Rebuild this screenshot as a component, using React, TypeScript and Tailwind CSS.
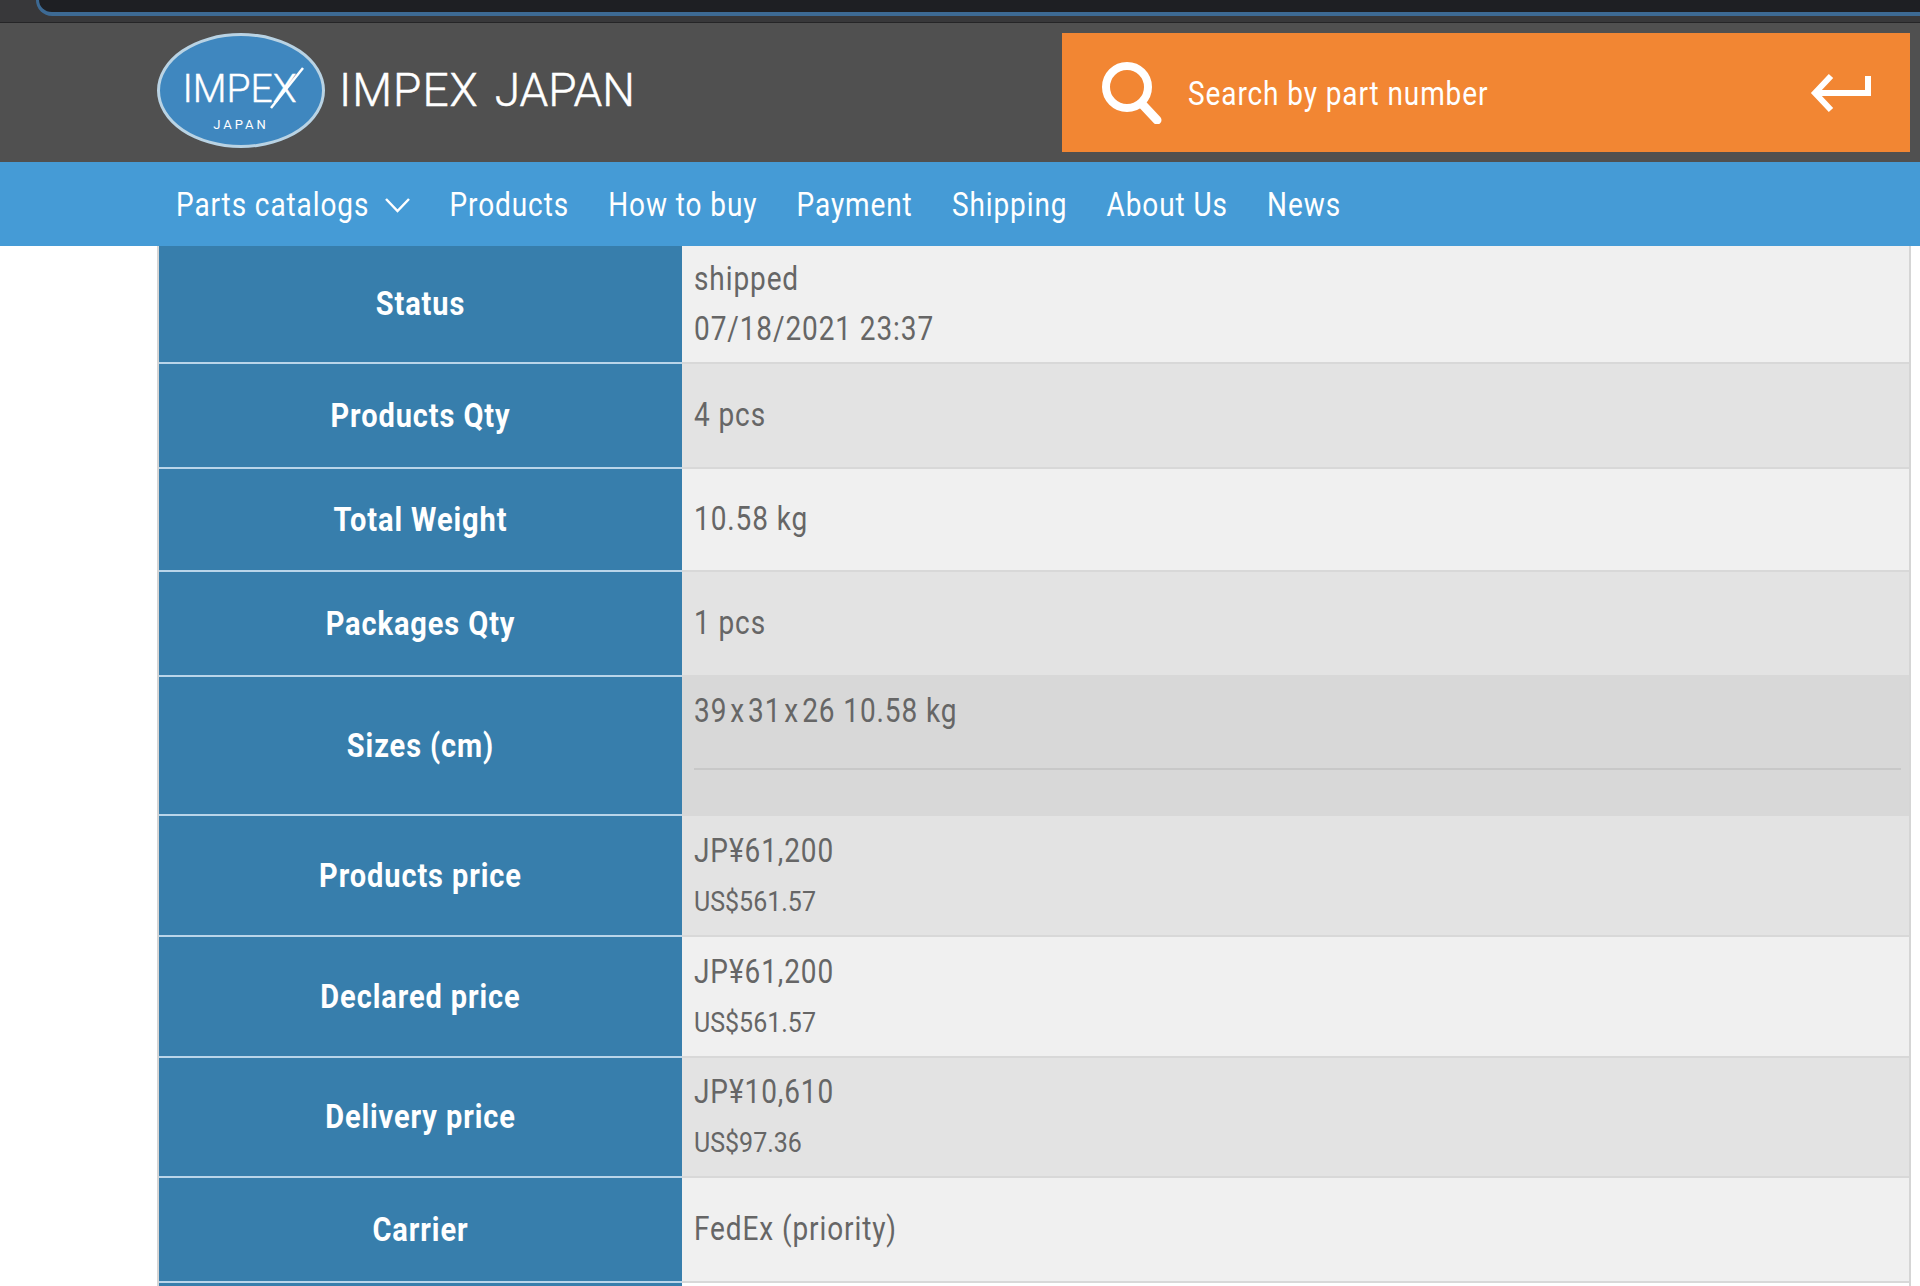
import React from 'react';

const rows = [
  { label: 'Status', h: 'h-[118px]', bg: 'bg-[#f0f0f0]', lines: ['shipped', '07/18/2021 23:37'] },
  { label: 'Products Qty', h: 'h-[105px]', bg: 'bg-[#e3e3e3]', lines: ['4 pcs'] },
  { label: 'Total Weight', h: 'h-[103px]', bg: 'bg-[#f0f0f0]', lines: ['10.58 kg'] },
  { label: 'Packages Qty', h: 'h-[105px]', bg: 'bg-[#e3e3e3]', lines: ['1 pcs'] },
  { label: 'Products price', h: 'h-[121px]', bg: 'bg-[#e3e3e3]', lines: ['JP¥61,200'], sub: 'US$561.57' },
  { label: 'Declared price', h: 'h-[121px]', bg: 'bg-[#f0f0f0]', lines: ['JP¥61,200'], sub: 'US$561.57' },
  { label: 'Delivery price', h: 'h-[120px]', bg: 'bg-[#e3e3e3]', lines: ['JP¥10,610'], sub: 'US$97.36' },
  { label: 'Carrier', h: 'h-[105px]', bg: 'bg-[#f0f0f0]', lines: ['FedEx (priority)'] },
];

const navItems = ['Products', 'How to buy', 'Payment', 'Shipping', 'About Us', 'News'];

// the screenshot is stretched vertically, so text gets a matching scale
const Tall = ({ children }: { children: React.ReactNode }) => (
  <span className="inline-block scale-y-[1.17] text-[28px] tracking-[0.9px]">{children}</span>
);

const Label = ({ text }: { text: string }) => (
  <div className="w-[523px] shrink-0 flex items-center justify-center pt-[2px] bg-[#377eac] border-b-2 border-[#b9d5ea] text-white">
    <span className="inline-block scale-y-[1.115] text-[29px] font-bold tracking-[0.9px]">{text}</span>
  </div>
);

const Row = ({ row }: { row: (typeof rows)[number] }) => (
  <div className={`flex ${row.h}`}>
    <Label text={row.label} />
    <div className={`flex-1 flex flex-col justify-center gap-[10px] pl-3 pt-[3px] text-[#666666] border-b-2 border-[#d8d8d8] ${row.bg}`}>
      {row.lines.map((line) => (
        <div key={line} className="leading-[36px]">
          <Tall>{line}</Tall>
        </div>
      ))}
      {row.sub && (
        <div className="leading-[28px] mt-[5px] mb-[3px]">
          <span className="inline-block scale-y-[1.125] text-[25px]">{row.sub}</span>
        </div>
      )}
    </div>
  </div>
);

export default function App() {
  return (
    <div className="w-[1920px] h-[1286px] overflow-hidden bg-white font-['Roboto',sans-serif]">
      <div className="h-[23px] bg-[#38383a] border-b border-[#252527]">
        <div className="h-[16px] ml-[36px] rounded-bl-[18px] border-b-[4px] border-l-[3px] border-[#3d6a94] bg-[#1e1f23]" />
      </div>

      <header className="h-[139px] bg-[#505050] flex items-start pt-[10px] pl-[157px] pr-[10px]">
        <div className="relative w-[168px] h-[115px] rounded-[50%] bg-[#3f87bf] border-[3px] border-[#b9d3e4] flex flex-col items-center text-white">
          <div className="mt-[33px] -ml-[3px] text-[39px] leading-[40px] font-light [-webkit-text-stroke:0.4px_white]">IMPEX</div>
          <div className="mt-[9px] text-[13px] leading-[14px] tracking-[3px]">JAPAN</div>
          <svg className="absolute left-[110px] top-[30px]" width="34" height="44" viewBox="0 0 34 44">
            <path d="M1 42 L33 2" stroke="white" strokeWidth="2.5" fill="none" />
          </svg>
        </div>
        <div className="ml-[14px] mt-[29px] text-white text-[46px] leading-[56px] font-light [-webkit-text-stroke:0.5px_white]">
          <span className="tracking-[1px]">IMPEX</span>
          <span className="ml-[16px]">JAPAN</span>
        </div>
        <div className="ml-auto w-[848px] h-[119px] bg-[#f28633] flex items-center pl-[39px] pr-[38px] text-white">
          <svg width="62" height="62" viewBox="0 0 62 62" fill="none" stroke="white" strokeLinecap="round">
            <circle cx="26" cy="25" r="21" strokeWidth="8" />
            <path d="M41 42 L56 58" strokeWidth="9" />
          </svg>
          <span className="ml-[25px] pt-[2px]"><Tall>Search by part number</Tall></span>
          <svg className="ml-auto" width="62" height="40" viewBox="0 0 62 40" fill="none" stroke="white" strokeWidth="6">
            <path d="M21 3 L5 20 L21 37" />
            <path d="M5 20 H58 V3" />
          </svg>
        </div>
      </header>

      <nav className="h-[84px] bg-[#459bd6] flex items-center pl-[176px] pt-[2px] text-white gap-[39.2px]">
        <div className="flex items-center gap-[16px]">
          <Tall>Parts catalogs</Tall>
          <svg width="25" height="15" viewBox="0 0 25 15" fill="none" stroke="white" strokeWidth="2.5">
            <path d="M1 1 L12.5 13 L24 1" />
          </svg>
        </div>
        {navItems.map((item) => (
          <Tall key={item}>{item}</Tall>
        ))}
      </nav>

      <div className="ml-[157px] w-[1754px] border-l-2 border-r-2 border-[#d5d5d5]">
        {rows.slice(0, 4).map((row) => (
          <Row key={row.label} row={row} />
        ))}
        <div className="flex h-[139px]">
          <Label text="Sizes (cm)" />
          <div className="flex-1 bg-[#d8d8d8] text-[#666666] pl-3 pr-2 pt-[16px]">
            <div className="leading-[36px] pb-[35px] border-b-2 border-[#c8c8c8]">
              <Tall>39<span className="mx-[3px]">x</span>31<span className="mx-[3px]">x</span>26 10.58 kg</Tall>
            </div>
          </div>
        </div>
        {rows.slice(4).map((row) => (
          <Row key={row.label} row={row} />
        ))}
        <div className="h-[10px] bg-[#377eac] w-[523px]" />
      </div>
    </div>
  );
}
